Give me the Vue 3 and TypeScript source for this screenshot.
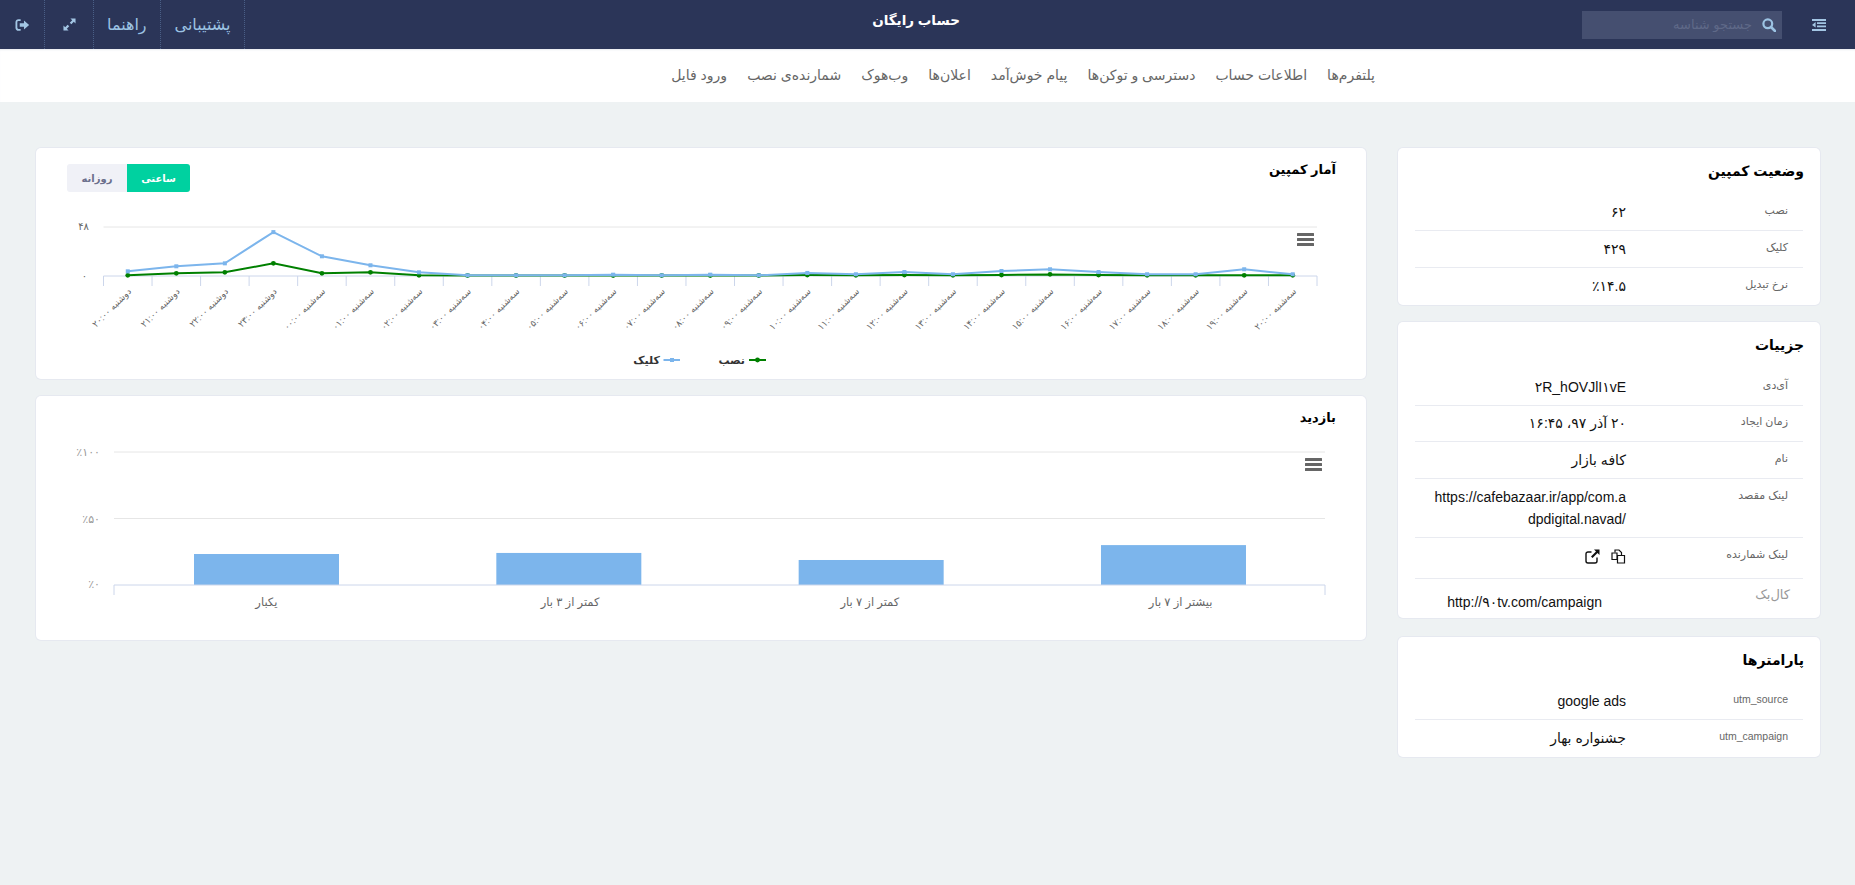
<script setup lang="ts">
import { computed } from "vue";

interface Row {
  label: string;
  value?: string;
  ltr?: boolean;
  kind?: string;
}

const navItems = [
  "پلتفرم‌ها",
  "اطلاعات حساب",
  "دسترسی و توکن‌ها",
  "پیام خوش‌آمد",
  "اعلان‌ها",
  "وب‌هوک",
  "شمارنده‌ی نصب",
  "ورود فایل",
];

const statusRows: Row[] = [
  { label: "نصب", value: "۶۲" },
  { label: "کلیک", value: "۴۲۹" },
  { label: "نرخ تبدیل", value: "٪۱۴.۵" },
];
const detailRows: Row[] = [
  { label: "آی‌دی", value: "۲R_hOVJlI۱vE", ltr: true },
  { label: "زمان ایجاد", value: "۲۰ آذر ۹۷، ۱۶:۴۵", kind: "tight" },
  { label: "نام", value: "کافه بازار" },
  { label: "لینک مقصد", value: "https://cafebazaar.ir/app/com.adpdigital.navad/", ltr: true },
  { label: "لینک شمارنده", kind: "icons" },
  { label: "کال‌بک", value: "http://۹۰tv.com/campaign", ltr: true, kind: "callback" },
];
const paramRows: Row[] = [
  { label: "utm_source", value: "google ads", ltr: true },
  { label: "utm_campaign", value: "جشنواره بهار" },
];

// نمودار آمار کمپین (مختصات داخل svg)
const LINE = { left: 67.5, right: 1281, base: 84, top: 35, max: 48 };
const installs = [0.7, 2.6, 3.6, 12.4, 2.6, 3.6, 0.7, 0.5, 0.5, 0.5, 0.5, 0.5, 0.5, 0.5, 1, 0.7, 1, 0.7, 1, 1.6, 1, 0.7, 0.7, 0.7, 0.7];
const clicks = [4.6, 9.5, 12.4, 43, 19.3, 10.5, 3.6, 0.7, 0.7, 0.7, 1.3, 0.7, 1.3, 0.7, 3, 1.7, 3.9, 1.7, 4.9, 6.6, 3.9, 1.7, 1.7, 6.6, 1.7];
const catW = (LINE.right - LINE.left) / clicks.length;

function fa(n: number): string {
  return String(n)
    .padStart(2, "0")
    .replace(/\d/g, (d) => "۰۱۲۳۴۵۶۷۸۹"[Number(d)]);
}
const hourLabels = clicks.map((_, i) => {
  const h = (20 + i) % 24;
  return `${i < 4 ? "دوشنبه" : "سه‌شنبه"} ${fa(h)}:۰۰`;
});
const xAt = (i: number) => LINE.left + catW * (i + 0.5);
const yAt = (v: number) => LINE.base - (v / LINE.max) * (LINE.base - LINE.top);
const pathOf = (vals: number[]) =>
  vals.map((v, i) => `${i ? "L" : "M"}${xAt(i).toFixed(1)},${yAt(v).toFixed(1)}`).join(" ");
const installPath = computed(() => pathOf(installs));
const clickPath = computed(() => pathOf(clicks));
const ticks = Array.from({ length: clicks.length + 1 }, (_, i) => LINE.left + catW * i);

// نمودار بازدید
const BAR = { left: 78, right: 1289, base: 149, top: 16, w: 145, first: 158, step: 302.33 };
const visits = [
  { name: "یکبار", pct: 23.3, dx: 1 },
  { name: "کمتر از ۳ بار", pct: 24.1, dx: 2 },
  { name: "کمتر از ۷ بار", pct: 18.8, dx: -1 },
  { name: "بیشتر از ۷ بار", pct: 30, dx: 7 },
];
const barCat = (BAR.right - BAR.left) / visits.length;
const barY = (p: number) => BAR.base - (p / 100) * (BAR.base - BAR.top);
const barTicks = [
  { label: "٪۱۰۰", y: BAR.top },
  { label: "٪۵۰", y: barY(50) },
];
</script>

<template>
  <div class="page" dir="rtl">
    <header class="topbar">
      <div class="top-right">
        <svg class="ic-outdent" viewBox="0 0 14 12" width="14" height="12">
          <path d="M0 0h14v2H0zM5 3.3h9v1.6H5zM5 6.6h9v1.6H5zM0 10h14v2H0zM3.6 3v5.6L0 6z" fill="#a3c6e4" />
        </svg>
        <div class="search">
          <svg viewBox="0 0 14 14" width="14" height="14">
            <circle cx="5.8" cy="5.8" r="4.4" fill="none" stroke="#9cc3e3" stroke-width="2.2" />
            <path d="M9 9l4 4" stroke="#9cc3e3" stroke-width="2.6" stroke-linecap="round" />
          </svg>
          <input type="text" placeholder="جستجو شناسه" />
        </div>
      </div>
      <div class="brand">حساب رایگان</div>
      <div class="top-left">
        <a class="top-item">پشتیبانی</a>
        <a class="top-item top-guide">راهنما</a>
        <a class="top-item top-icon">
          <svg viewBox="0 0 14 14" width="13" height="13">
            <path d="M8 .5h5.5V6l-1.9-1.9L9 6.7 7.3 5l2.6-2.6zM6 13.5H.5V8l1.9 1.9L5 7.3 6.7 9l-2.6 2.6z" fill="#a3c6e4" />
          </svg>
        </a>
        <a class="top-item top-icon">
          <svg viewBox="0 0 16 13" width="15" height="12">
            <path d="M6 1.2H3.6a2.2 2.2 0 0 0-2.2 2.2v6.2a2.2 2.2 0 0 0 2.2 2.2H6" fill="none" stroke="#a3c6e4" stroke-width="2" />
            <path d="M5 4.6h4.6V1.6l5.6 4.9-5.6 4.9V8.4H5z" fill="#a3c6e4" />
          </svg>
        </a>
      </div>
    </header>

    <nav class="subnav">
      <a v-for="item in navItems" :key="item">{{ item }}</a>
    </nav>

    <main class="content">
      <aside class="side">
        <section class="card">
          <h3 class="card-title">وضعیت کمپین</h3>
          <div v-for="r in statusRows" :key="r.label" class="row">
            <div class="row-label">{{ r.label }}</div>
            <div class="row-value">{{ r.value }}</div>
          </div>
        </section>

        <section class="card card-details">
          <h3 class="card-title">جزییات</h3>
          <div v-for="r in detailRows" :key="r.label" class="row" :class="r.kind">
            <div class="row-label">{{ r.label }}</div>
            <div v-if="r.kind === 'icons'" class="row-value row-icons">
              <svg viewBox="0 0 15 15" width="15" height="15">
                <path d="M4 3.500V1h4l2.500 2.500V6" fill="none" stroke="#111" stroke-width="1.200" />
                <path d="M1 4h5v6.500H1zM6.500 6.500H13.500V14H6.500z" fill="#fff" stroke="#111" stroke-width="1.200" />
              </svg>
              <svg viewBox="0 0 15 15" width="15" height="15">
                <path d="M6.500 3H3a2 2 0 0 0-2 2v7a2 2 0 0 0 2 2h7a2 2 0 0 0 2-2V8.500" fill="none" stroke="#111" stroke-width="1.400" />
                <path d="M9 .5h5.500V6l-2-2-5 5-1.500-1.500 5-5z" fill="#111" />
              </svg>
            </div>
            <div v-else class="row-value" :class="{ ltr: r.ltr }">{{ r.value }}</div>
          </div>
        </section>

        <section class="card">
          <h3 class="card-title">پارامترها</h3>
          <div v-for="r in paramRows" :key="r.label" class="row">
            <div class="row-label utm">{{ r.label }}</div>
            <div class="row-value" :class="{ ltr: r.ltr }">{{ r.value }}</div>
          </div>
        </section>
      </aside>

      <div class="charts">
        <section class="card chart-card">
          <div class="chart-head">
            <h3 class="chart-title">آمار کمپین</h3>
            <div class="toggle">
              <button class="on">ساعتی</button>
              <button>روزانه</button>
            </div>
          </div>
          <svg class="chart" viewBox="0 0 1330 187" width="1330" height="187">
            <line :x1="LINE.left" :x2="LINE.right" :y1="LINE.top" :y2="LINE.top" class="grid" />
            <line :x1="LINE.left" :x2="LINE.right" :y1="LINE.base" :y2="LINE.base" class="axis" />
            <line v-for="t in ticks" :key="t" :x1="t" :x2="t" :y1="LINE.base" :y2="LINE.base + 10" class="axis" />
            <text :x="53" :y="LINE.top + 3" class="y-label" text-anchor="end">۴۸</text>
            <text :x="51" :y="LINE.base + 3" class="y-label" text-anchor="end">۰</text>

            <path :d="installPath" fill="none" stroke="#008000" stroke-width="2" />
            <circle v-for="(v, i) in installs" :key="i" :cx="xAt(i)" :cy="yAt(v)" r="2.4" fill="#008000" />
            <path :d="clickPath" fill="none" stroke="#7cb5ec" stroke-width="2" />
            <rect v-for="(v, i) in clicks" :key="i" :x="xAt(i) - 2" :y="yAt(v) - 2" width="4" height="4" fill="#7cb5ec" />

            <text
              v-for="(lab, i) in hourLabels"
              :key="lab"
              :x="xAt(i) + 4"
              :y="100"
              class="x-label"
              text-anchor="end"
              :transform="`rotate(-45 ${xAt(i) + 4} 100)`"
            >{{ lab }}</text>

            <g class="hamburger" transform="translate(1261 41)">
              <rect width="17" height="3" rx="0.5" />
              <rect y="5" width="17" height="3" rx="0.5" />
              <rect y="10" width="17" height="3" rx="0.5" />
            </g>

            <line x1="713" x2="730" y1="168" y2="168" stroke="#008000" stroke-width="2" />
            <circle cx="721.500" cy="168" r="2.400" fill="#008000" />
            <text x="709" y="172" class="legend" text-anchor="end">نصب</text>
            <line x1="627.500" x2="644" y1="168" y2="168" stroke="#7cb5ec" stroke-width="2" />
            <rect x="634" y="166" width="4" height="4" fill="#7cb5ec" />
            <text x="624" y="172" class="legend" text-anchor="end">کلیک</text>
          </svg>
        </section>

        <section class="card chart-card">
          <div class="chart-head chart-head-short">
            <h3 class="chart-title">بازدید</h3>
          </div>
          <svg class="chart" viewBox="0 0 1330 204" width="1330" height="204">
            <line v-for="t in barTicks" :key="t.label" :x1="BAR.left" :x2="BAR.right" :y1="t.y" :y2="t.y" class="grid" />
            <text v-for="t in barTicks" :key="t.label + 'l'" x="64" :y="t.y + 4" class="y-label bar-y" text-anchor="end">{{ t.label }}</text>
            <text x="64" :y="BAR.base + 3" class="y-label bar-y" text-anchor="end">٪۰</text>

            <rect
              v-for="(b, i) in visits"
              :key="b.name"
              :x="BAR.first + BAR.step * i"
              :y="barY(b.pct)"
              :width="BAR.w"
              :height="BAR.base - barY(b.pct)"
              fill="#7cb5ec"
            />
            <line :x1="BAR.left" :x2="BAR.right" :y1="BAR.base" :y2="BAR.base" class="axis" />
            <line :x1="BAR.left" :x2="BAR.left" :y1="BAR.base" :y2="BAR.base + 10" class="axis" />
            <line :x1="BAR.right" :x2="BAR.right" :y1="BAR.base" :y2="BAR.base + 10" class="axis" />
            <text
              v-for="(b, i) in visits"
              :key="b.name + 'x'"
              :x="BAR.left + barCat * (i + 0.5) + b.dx"
              y="170"
              class="cat-label"
              text-anchor="middle"
            >{{ b.name }}</text>

            <g class="hamburger" transform="translate(1269 22)">
              <rect width="17" height="3" rx="0.5" />
              <rect y="5" width="17" height="3" rx="0.5" />
              <rect y="10" width="17" height="3" rx="0.5" />
            </g>
          </svg>
        </section>
      </div>
    </main>
  </div>
</template>

<style>
html,
body {
  background: #eef2f3;
}
</style>

<style scoped>
.page {
  min-height: 885px;
  background: #eef2f3;
  font-family: "Liberation Sans", "DejaVu Sans", sans-serif;
  color: #111;
}

/* نوار بالا */
.topbar {
  height: 49px;
  background: #2b3558;
  display: grid;
  grid-template-columns: 1fr auto 1fr;
  align-items: center;
  padding-right: 23px;
}
.top-right {
  display: flex;
  align-items: center;
  gap: 30px;
  padding-right: 6px;
}
.search {
  width: 200px;
  height: 28px;
  background: #454f70;
  display: flex;
  align-items: center;
  gap: 8px;
  padding-right: 6px;
  box-sizing: border-box;
}
.search input {
  flex: 1;
  min-width: 0;
  border: 0;
  outline: 0;
  background: transparent;
  font: 13px "Liberation Sans", "DejaVu Sans", sans-serif;
  color: #fff;
}
.search input::placeholder {
  color: #5f6988;
}
.brand {
  color: #fff;
  font-weight: 700;
  font-size: 13.5px;
  padding-bottom: 10px;
}
.top-left {
  display: flex;
  justify-content: flex-end;
  height: 49px;
}
.top-item {
  display: flex;
  align-items: center;
  justify-content: center;
  padding: 0 14px;
  color: #9cc3e3;
  font-size: 16px;
  border-right: 1px dotted #4a5f86;
}
.top-guide {
  padding: 0 13px;
}
.top-icon {
  padding: 0;
  width: 48px;
}
.top-icon:last-child {
  width: 44px;
}
.top-icon svg {
  display: block;
}

/* منوی دوم */
.subnav {
  height: 53px;
  box-sizing: border-box;
  padding-bottom: 2px;
  background: #fff;
  display: flex;
  align-items: center;
  gap: 20px;
  padding-right: 480px;
  box-shadow: inset 0 2px 2px -1px #e8ebf0;
}
.subnav a {
  font-size: 14px;
  color: #666;
}

.content {
  display: flex;
  gap: 32px;
  padding: 46px 35px 0 36px;
  align-items: flex-start;
}
.side {
  width: 422px;
  flex: none;
}
.charts {
  flex: 1;
  min-width: 0;
}
.card {
  background: #fff;
  border-radius: 5px;
  box-shadow: 0 0 0 1px #e6e9f0;
  margin-bottom: 17px;
}
.card-details {
  margin-bottom: 19px;
}

.card-title {
  margin: 0;
  height: 46px;
  box-sizing: border-box;
  padding: 12px 16px 0 0;
  font-size: 14px;
  line-height: 22px;
  font-weight: 700;
  color: #000;
}
.card-details .card-title {
  height: 47px;
}
.row {
  display: flex;
  margin: 0 17px;
  padding: 7px 0;
  border-bottom: 1px solid #e9ebf1;
}
.row:last-child {
  border-bottom-color: transparent;
}
.row.tight {
  padding-top: 6px;
}
.row-label {
  width: 162px;
  padding-right: 15px;
  flex: none;
  font-size: 11px;
  line-height: 18px;
  color: #666;
}
.row-label.utm {
  font-size: 10.5px;
  color: #666;
}
.row-value {
  width: 198px;
  font-size: 14px;
  line-height: 22px;
  color: #111;
  word-break: break-all;
}
.row-value.ltr {
  direction: ltr;
  text-align: right;
}
.row-icons {
  display: flex;
  gap: 11px;
  padding-top: 4px;
  height: 26px;
  box-sizing: border-box;
}
.callback {
  padding-bottom: 4px;
}
.callback .row-label {
  font-size: 13px;
  color: #999;
  width: 164px;
  padding-right: 13px;
}
.callback .row-value {
  padding-top: 5px;
  padding-right: 24px;
  box-sizing: border-box;
}

.chart-card {
  overflow: hidden;
}
.chart-head {
  height: 44px;
  box-sizing: border-box;
  padding: 16px 30px 0 31px;
  display: flex;
  justify-content: space-between;
  align-items: flex-start;
}
.chart-head-short {
  height: 40px;
  padding-top: 12px;
}
.chart-title {
  margin: 0;
  font-size: 13px;
  line-height: 20px;
  font-weight: 700;
  color: #000;
}
.chart-head:not(.chart-head-short) .chart-title {
  margin-top: -4px;
}
.toggle {
  display: flex;
  height: 28px;
}
.toggle button {
  width: 60px;
  border: 0;
  padding: 0;
  background: #f0f1f7;
  color: #6b6f8c;
  font: 700 10px "Liberation Sans", "DejaVu Sans", sans-serif;
  border-radius: 3px 0 0 3px;
}
.toggle button.on {
  background: #00d1a0;
  color: #fff;
  width: 63px;
  border-radius: 0 3px 3px 0;
}

.chart {
  display: block;
  direction: ltr;
}
.grid {
  stroke: #e6e6e6;
  stroke-width: 1;
}
.axis {
  stroke: #ccd6eb;
  stroke-width: 1;
}
.y-label {
  font-size: 10px;
  fill: #666;
}
.bar-y {
  fill: #999;
  font-size: 11px;
}
.x-label {
  font-size: 9px;
  fill: #666;
}
.cat-label {
  font-size: 11.5px;
  fill: #666;
}
.legend {
  font-size: 11px;
  font-weight: 700;
  fill: #333;
}
.hamburger rect {
  fill: #666;
}
</style>
